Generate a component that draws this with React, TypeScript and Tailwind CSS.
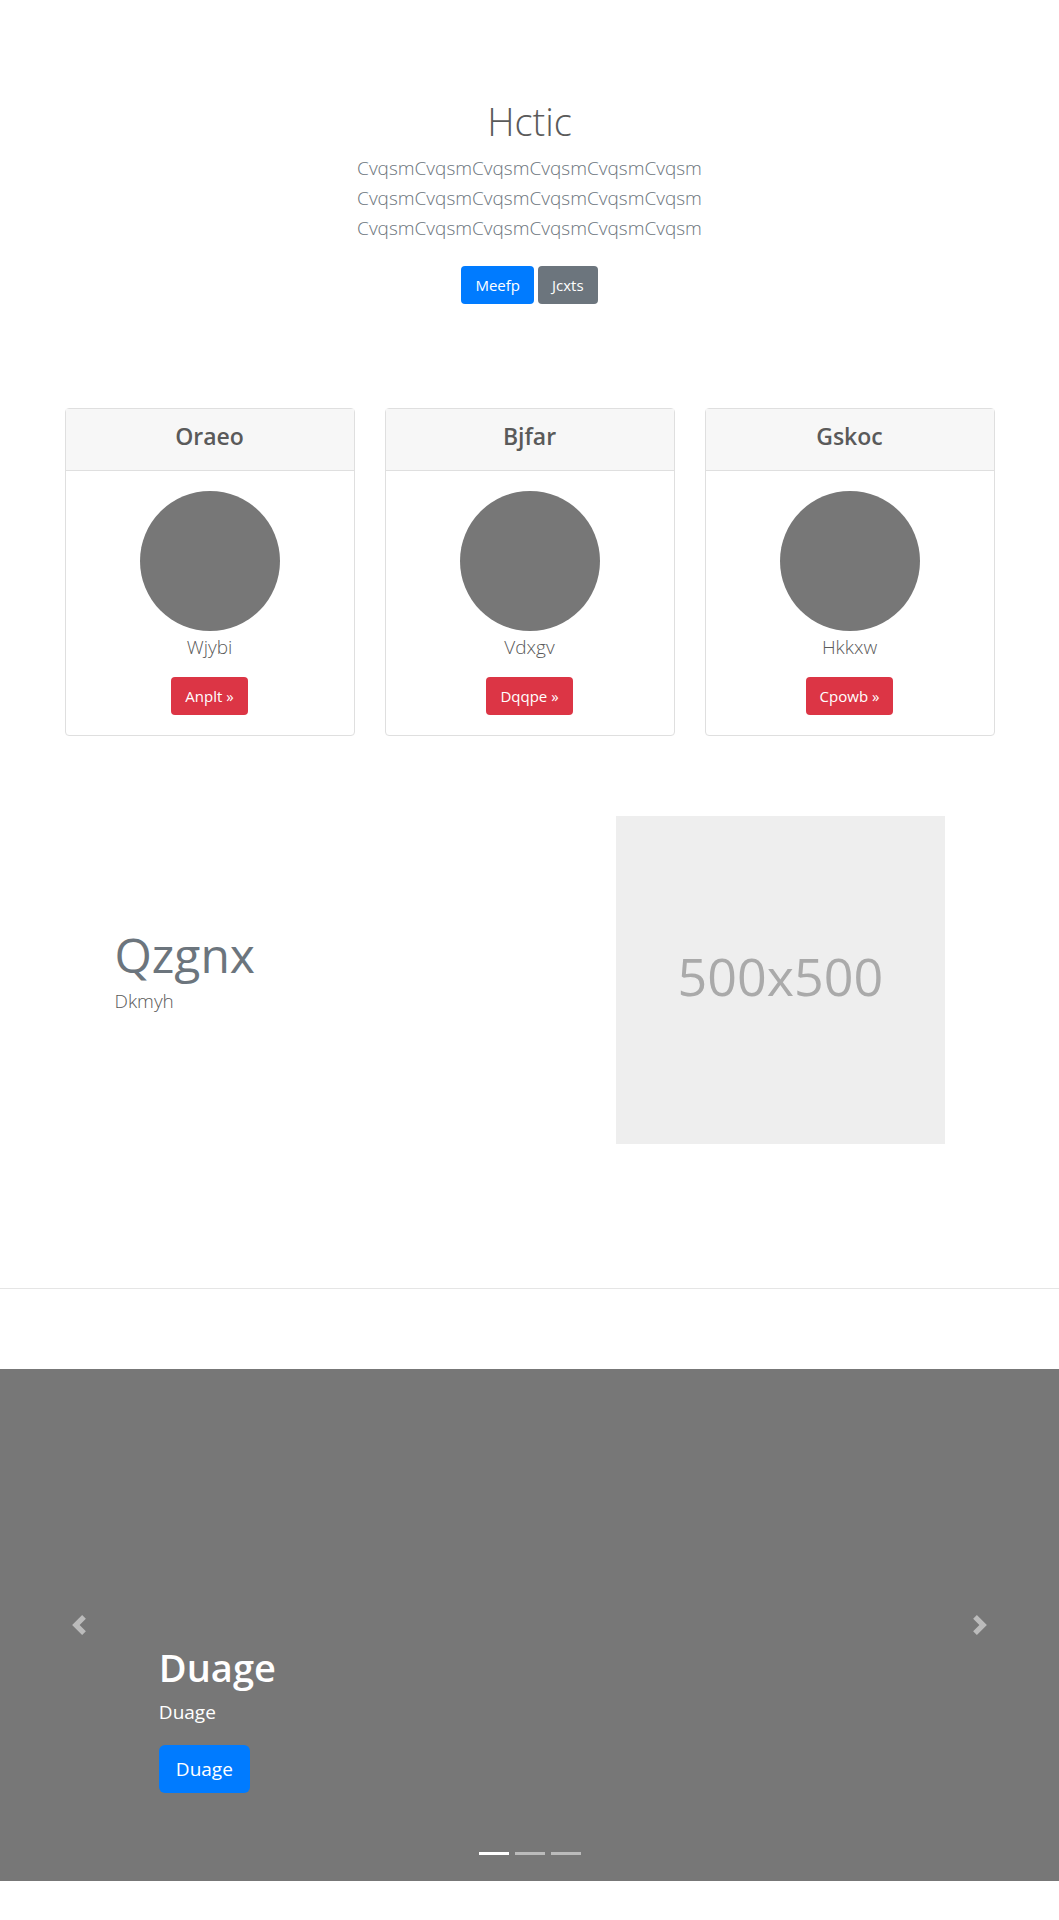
const cards = [
  { title: "Oraeo", text: "Wjybi", action: "Anplt »" },
  { title: "Bjfar", text: "Vdxgv", action: "Dqqpe »" },
  { title: "Gskoc", text: "Hkkxw", action: "Cpowb »" },
];

const intro = "CvqsmCvqsmCvqsmCvqsmCvqsmCvqsm";

const button = "inline-block rounded px-[14px] py-[7px] text-[15px] leading-6 text-white";

function Chevron({ flipped = false }: { flipped?: boolean }) {
  return (
    <svg viewBox="0 0 8 8" className="size-5" fill="#fff" aria-hidden="true">
      <path
        d={
          flipped
            ? "M2.75 0l-1.5 1.5 2.5 2.5-2.5 2.5 1.5 1.5 4-4-4-4z"
            : "M5.25 0l-4 4 4 4 1.5-1.5-2.5-2.5 2.5-2.5-1.5-1.5z"
        }
      />
    </svg>
  );
}

export default function App() {
  return (
    <main className="bg-white font-['Open_Sans','Noto_Sans',sans-serif] text-[#5a5a5a]">
      <section className="px-4 pt-[97px] pb-[104px] text-center">
        <h1 className="text-[38px] leading-[48px] font-light">Hctic</h1>
        <p className="mt-2 text-[19px] leading-[30px] font-light text-[#6c757d]">
          {intro}
          <br />
          {intro}
          <br />
          {intro}
        </p>
        <div className="mt-[23px] flex justify-center gap-1">
          <a href="#" className={`${button} bg-[#007bff]`}>Meefp</a>
          <a href="#" className={`${button} bg-[#6c757d]`}>Jcxts</a>
        </div>
      </section>

      <div className="mx-auto max-w-[960px] px-[15px]">
        <section className="grid grid-cols-3 gap-[30px]">
          {cards.map((card) => (
            <article key={card.title} className="rounded border border-[#dfdfdf] text-center">
              <h2 className="border-b border-[#dfdfdf] bg-[#f7f7f7] pt-[13px] pb-[19px] text-[23px] leading-[29px] font-semibold">
                {card.title}
              </h2>
              <div className="p-5">
                <div className="mx-auto size-[140px] rounded-full bg-[#777]" />
                <p className="mt-px mb-[15px] text-[19px] leading-[30px] font-light">{card.text}</p>
                <a href="#" className={`${button} bg-[#dc3545]`}>{card.action}</a>
              </div>
            </article>
          ))}
        </section>

        <section className="mt-20 grid grid-cols-12 items-center gap-x-[30px] px-[50px]">
          <div className="col-span-7 pb-[19px]">
            <h2 className="text-[48px] leading-[60px] text-[#6c757d]">Qzgnx</h2>
            <p className="mt-px text-[19px] leading-[30px] font-light">Dkmyh</p>
          </div>
          <div className="col-span-5 flex aspect-square items-center justify-center bg-[#eee] pb-2 text-[52px] text-[#aaa]">
            500x500
          </div>
        </section>
      </div>

      <hr className="mt-36 mb-20 border-[#e5e5e5]" />

      <section className="grid h-[512px] grid-cols-[15%_1fr_15%] grid-rows-[1fr_auto] bg-[#777] text-white">
        <button type="button" aria-label="Previous" className="row-span-2 flex items-center justify-center opacity-50">
          <Chevron />
        </button>
        <div className="flex flex-col items-start justify-end">
          <h2 className="text-[38px] leading-[48px] font-semibold">Duage</h2>
          <p className="mt-[6px] mb-[18px] text-[19px] leading-[30px]">Duage</p>
          <a href="#" className="rounded-md bg-[#007bff] px-[17px] py-[9px] text-[19px] leading-[30px]">Duage</a>
        </div>
        <button type="button" aria-label="Next" className="row-span-2 flex items-center justify-center opacity-50">
          <Chevron flipped />
        </button>
        <div className="col-start-2 flex items-start justify-center gap-[6px] pt-[59px] pb-[26px]">
          <button type="button" aria-label="Slide 1" className="h-[3px] w-[30px] bg-white" />
          <button type="button" aria-label="Slide 2" className="h-[3px] w-[30px] bg-white/50" />
          <button type="button" aria-label="Slide 3" className="h-[3px] w-[30px] bg-white/50" />
        </div>
      </section>
    </main>
  );
}
